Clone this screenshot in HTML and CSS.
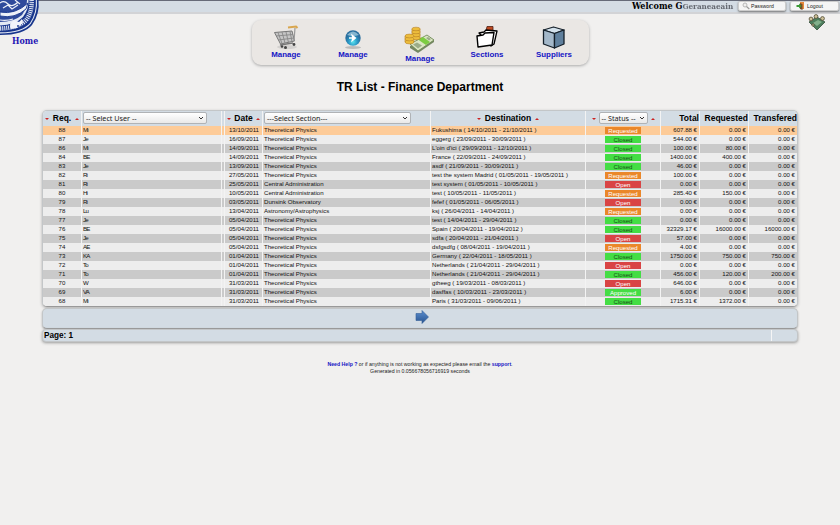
FILE: index.html
```
<!DOCTYPE html>
<html lang="en">
<head>
<meta charset="utf-8">
<title>TR List - Finance Department</title>
<link rel="stylesheet" href="styles.css">
</head>
<body>
<header class="topbar">
  <div class="welcome">Welcome G<span class="smudge">Geraneaeain</span></div>
  <a class="btn"><svg width="8" height="8" viewBox="0 0 8 8"><circle cx="3" cy="3" r="2" fill="#eee" stroke="#aaa" stroke-width=".8"/><path d="M4.500 4.500L7.300 7" stroke="#999" stroke-width="1.100"/></svg><span>Password</span></a>
  <a class="btn logout"><svg width="9" height="8" viewBox="0 0 9 8"><path d="M4 0h4v7H4z" fill="#e98a3a"/><path d="M4 1l2.500 1v6L4 7z" fill="#72512b"/><path d="M.5 3H3V1.500L5.500 4 3 6.500V5H.5z" fill="#3c9a35"/></svg><span>Logout</span></a>
</header>
<svg class="seal" width="40" height="36" viewBox="0 0 40 36">
  <path d="M38.500 0Q40 14 32 25Q24 35 0 35V0z" fill="#17358c"/>
  <path d="M36.900 0Q38 13 30.800 23.800Q23 33.400 0 33.400V0z" fill="#dfe5f2"/>
  <path d="M35.800 0Q36.800 13 30 23Q22 32.300 0 32.300V0z" fill="#17358c"/>
  <path d="M31.500 0Q32.500 11 26.500 19.500Q19 28 0 28.500" fill="none" stroke="#dfe5f2" stroke-width="4.500" stroke-dasharray="1.100 .9"/>
  <path d="M28.500 0Q29 9 23 17Q15 25 0 25.500V0z" fill="#e4eaf4"/>
  <path d="M27 0Q27 8 22 15Q14 22 0 22V0z" fill="#2f4a9b"/>
  <path d="M0 12Q15 15 28 3L26 9Q15 19 0 16z" fill="#eef1f8" stroke="#17358c" stroke-width=".9"/>
  <path d="M0 3q4-3 8 1t10-2M3 8l5-3 4 4 6-4M15 0l5 4M0 20q7 1 13-1" fill="none" stroke="#eef1f8" stroke-width="1.200"/>
  <path d="M10 24l4-4 5 2 3-3 1 4-6 5-6 1z" fill="#f3f5fa"/>
  <circle cx="18" cy="26" r=".9" fill="#17358c"/>
</svg>
<a class="home">Home</a>
<svg class="people" width="18" height="17" viewBox="0 0 18 17"><path d="M1 8l8-5 8 5-8 8z" fill="#4d7d5c" stroke="#344e3a" stroke-width=".8"/><path d="M5 9l5-3 4 2-5 4z" fill="#82b08b"/><g fill="#cfc39a" stroke="#514a34" stroke-width=".8"><circle cx="3" cy="5" r="1.900"/><circle cx="8" cy="2.500" r="1.900"/><circle cx="14.500" cy="4.500" r="1.900"/><circle cx="5" cy="11" r="1.200"/></g></svg>
<nav class="menu">
  <a><svg width="27" height="25" viewBox="0 0 27 25"><ellipse cx="14" cy="22" rx="10" ry="2" fill="#d3d1cf"/><path d="M1.500 7.500L19 6l2.500 10-14 3z" fill="#c5c5c5" stroke="#777" stroke-width="1"/><path d="M5 7.500l4 11M9 7l3 11M13 7l2.500 10.500M17 6.500l2 10M3 11l17-1.500M5 15l16-2" stroke="#888" stroke-width=".9"/><path d="M21 16L22 3" stroke="#999" stroke-width="1.200"/><path d="M15 2.500l8-1 1.500 1.500" fill="none" stroke="#d9a64e" stroke-width="2"/><path d="M7 20l13-2" stroke="#777" stroke-width="1.300"/><g fill="#444"><circle cx="9" cy="21.500" r="1.300"/><circle cx="12.500" cy="22.500" r="1.500"/><circle cx="21" cy="19.500" r="1.400"/></g></svg><b>Manage</b></a>
  <a><svg width="20" height="21" viewBox="0 0 20 21"><defs><radialGradient id="orb" cx=".5" cy=".75"><stop offset="0" stop-color="#5be4ee"/><stop offset=".55" stop-color="#2b9bc8"/><stop offset="1" stop-color="#2a6f9f"/></radialGradient></defs><ellipse cx="10" cy="18.500" rx="8" ry="1.500" fill="#bbb"/><circle cx="10" cy="9" r="7.700" fill="url(#orb)"/><path d="M4 6Q10-1 16 6Q10 8 4 6" fill="#b9dcea" opacity=".65"/><path d="M6 8.200h3L8 4.500l5.500 4.500L8 13.500l1-3.700H6z" fill="#fff"/></svg><b>Manage</b></a>
  <a class="low"><svg width="32" height="28" viewBox="0 0 32 28"><path d="M6 20l18-10 6 4v2L14 27l-8-5z" fill="#758763"/><path d="M6 18l17-9 7 5-16 11z" fill="#dbe5c4" stroke="#68844e" stroke-width=".8"/><path d="M9 18.500l4-2 5 3-4 3zM22 12l2-1 3 2-2 1.500z" fill="#9bac88"/><path d="M14 13.500l8 5.500 4-3-7-5z" fill="#7ccc42"/><g fill="#edbd3c" stroke="#b98328" stroke-width=".6"><path d="M8 3v10h8V3zM1 10v6h9v-6z"/><ellipse cx="12" cy="12" rx="4.200" ry="1.800"/><ellipse cx="12" cy="9" rx="4.200" ry="1.800"/><ellipse cx="12" cy="6" rx="4.200" ry="1.800"/><ellipse cx="12" cy="3" rx="4.200" ry="1.800"/><ellipse cx="5.500" cy="16" rx="4.500" ry="1.900"/><ellipse cx="5.500" cy="13" rx="4.500" ry="1.900"/><ellipse cx="5.500" cy="10" rx="4.500" ry="1.900"/></g></svg><b>Manage</b></a>
  <a><svg width="24" height="25" viewBox="0 0 24 25"><path d="M11 6l1-4.500h6V6z" fill="#bf4b22" stroke="#4d2115" stroke-width=".8"/><path d="M4 8l5-1 2-2 11 1-3 13-3 2z" fill="#fff" stroke="#000" stroke-width="1.300" stroke-linejoin="round"/><path d="M2 11l6-1 2-2 9-.5L17 20 3 22z" fill="#fff" stroke="#000" stroke-width="1.400" stroke-linejoin="round"/></svg><b>Sections</b></a>
  <a><svg width="24" height="24" viewBox="0 0 24 24"><g stroke="#15202a" stroke-width="1.300" stroke-linejoin="round"><path d="M1.500 4l10-3 10.500 3-9.500 3.500z" fill="#d4e2ec"/><path d="M1.500 4l11 3.500V22l-11-4z" fill="#a4b8c9"/><path d="M22 4l-9.500 3.500V22l9.500-4z" fill="#60809d"/></g></svg><b>Suppliers</b></a>
</nav>
<h1>TR List - Finance Department</h1>
<main>
  <section class="list">
    <div class="row head">
      <div class="mid"><i class="down"></i><b>Req.</b><i class="up"></i></div>
      <div><span class="select user">-- Select User --<svg viewBox="0 0 6 4"><path d="M1 1l2 2 2-2"/></svg></span></div>
      <div class="sliver"></div>
      <div class="mid date"><i class="down"></i><b>Date</b><i class="up"></i></div>
      <div><span class="select section">---Select Section---<svg viewBox="0 0 6 4"><path d="M1 1l2 2 2-2"/></svg></span></div>
      <div class="mid"><i class="down"></i><b>Destination</b><i class="up"></i></div>
      <div class="mid stat"><i class="down"></i><span class="select status">-- Status --<svg viewBox="0 0 6 4"><path d="M1 1l2 2 2-2"/></svg></span><i class="up"></i></div>
      <div class="end"><b>Total</b></div><div class="end"><b>Requested</b></div><div class="end"><b>Transfered</b></div>
    </div>
    <div id="rows"></div>
  </section>
  <section class="pager"><svg width="14" height="14" viewBox="0 0 14 14"><defs><linearGradient id="ar" x2="0" y2="1"><stop stop-color="#5b8fd0"/><stop offset="1" stop-color="#28538f"/></linearGradient></defs><path d="M1 3.500h6V.5L13.500 7 7 13.500v-3H1z" fill="url(#ar)" stroke="#345f98" stroke-width=".6"/></svg></section>
  <section class="page"><b>Page: 1</b><span></span></section>
</main>
<footer><p><b>Need Help ?</b> or if anything is not working as expected please email the <b>support</b>.</p><p>Generated in 0.056678056716919 seconds</p></footer>
<script src="rows.js"></script>
</body>
</html>
```
FILE: styles.css
```
* { box-sizing: border-box; }
body { margin: 0; width: 840px; height: 525px; overflow: hidden; position: relative; background: #f1f0ef; font-family: "Liberation Sans", Arial, sans-serif; color: #000; }
.topbar { height: 14px; border-top: 1px solid #666a78; border-bottom: 2px solid #d2d3d6; background: #d4dce4; display: flex; align-items: flex-start; justify-content: flex-end; gap: 4px; padding-right: 1px; }
.welcome { width: 102px; font: bold 9px/10px "DejaVu Serif Condensed", "DejaVu Serif", serif; white-space: nowrap; }
.smudge { color: #666a72; filter: blur(.7px); font-size: 8px; }
.btn { width: 48px; height: 10px; border: 1px solid #ccc; border-radius: 2px; background: #f5f5f5; box-shadow: 0 1px 2px #777; display: flex; align-items: center; padding-left: 3px; gap: 1px; font-size: 5.2px; color: #222; }
.logout { width: 49px; padding-left: 5px; gap: 2px; }
.seal { position: absolute; left: 0; top: 0; }
.home { position: absolute; left: 12px; top: 36px; font: bold 8.8px/10px "DejaVu Serif Condensed", "DejaVu Serif", serif; color: #1e14b4; }
.people { position: absolute; left: 808px; top: 14px; }
.menu { width: 337px; height: 45px; margin: 6px 0 0 251.500px; border-radius: 9px; background: #eae7e4; box-shadow: 0 1px 3px #aaa; display: flex; padding: 0 1px; }
.menu a { width: 67px; height: 39px; display: flex; flex-direction: column; align-items: center; justify-content: flex-end; }
.menu a.low { height: 43px; }
.menu b { font-size: 7.9px; line-height: 9px; color: #1414c4; }
h1 { margin: 15px 0 0; font-size: 12px; line-height: 14px; text-align: center; }
main { width: 756px; margin: 16px 0 0 42px; }
.list { height: 197px; border: 1px solid #c3c6c8; border-bottom-color: #999; border-radius: 5px; overflow: hidden; background: #f3f3f3; box-shadow: 0 1px 3px #aaa; }
.row { display: grid; grid-template-columns: 38px 139px 2px 37px 167px 154px 74px 38px 48px 48px; column-gap: 1px; height: 9px; font-size: 6.1px; line-height: 8px; color: #111; white-space: nowrap; }
.row > div { background: #ededed; padding: 0 1px; overflow: hidden; }
.row.alt > div { background: #cacaca; }
.row.hot > div { background: #fdcb98; }
.row.head { height: 15px; line-height: 15px; color: #000; font-size: 8.5px; }
.row.head > div { background: #d3dce4; display: flex; align-items: center; padding: 0 1px; }
.row.head > .mid { justify-content: center; gap: 4px; }
.row.head > .end { justify-content: flex-end; padding: 0; }
.row.head > .date { gap: 3px; }
.row.head > .stat { gap: 3px; }
.row .sliver { padding: 0; }
.down, .up { border: 2px solid transparent; width: 0; height: 0; }
.down { border-top-color: #c22; border-bottom: 0; }
.up { border-bottom-color: #c22; border-top: 0; }
.select { display: flex; align-items: center; justify-content: space-between; height: 12px; margin-bottom: 1px; border: 1px solid #b0b3b6; border-radius: 2px; background: linear-gradient(#fff, #e9e9e9); font: 7.2px/10px "Noto Sans", sans-serif; color: #222; padding: 0 2px; }
.select svg { width: 6px; height: 4px; fill: none; stroke: #333; stroke-width: 1; }
.user { width: 124px; }
.section { width: 147px; }
.status { width: 49px; }
.num, .tag { text-align: center; }
.name { letter-spacing: -.8px; }
.row > .money { text-align: right; padding-right: 2px; }
.row > .day { text-align: right; padding: 0 3px 0 0; }
.row > .tag { padding: 1px 19px; }
.tag span { display: block; height: 7px; line-height: 7px; background: #4d4; color: #174d17; }
.tag .Open { background: #d94444; color: #fff; }
.tag .Requested { background: #ea872a; color: #fff; }
.tag .Approved { color: #fff; }
.pager { height: 21px; margin-top: 1px; border: 1px solid #c3c6c8; border-bottom-color: #999; border-radius: 5px; background: #d3dce4; box-shadow: 0 1px 2px #aaa; display: flex; align-items: center; justify-content: center; padding: 0 0 4px 3px; }
.page { height: 13px; border: 1px solid #c3c6c8; border-radius: 4px; background: #d3dce4; box-shadow: 0 1px 3px #999; display: flex; justify-content: space-between; padding: 0 25px 0 1px; font-size: 8.2px; line-height: 11px; }
.page span { width: 1px; background: #f5f5f5; }
footer { margin-top: 19px; text-align: center; font-size: 5.2px; line-height: 6.500px; color: #222; }
footer p { margin: 0; }
footer b { color: #1414c4; }
```
FILE: rows.js
```
const T = "Theoretical Physics", C = "Central Administration";
const data = [
  [88, "Mi", "13/10/2011", T, "Fukushima ( 14/10/2011 - 21/10/2011 )", "Requested", "607.88", "0.00", "0.00"],
  [87, "Je", "16/09/2011", T, "eggerg ( 23/09/2011 - 30/09/2011 )", "Closed", "544.00", "0.00", "0.00"],
  [86, "Mi", "14/09/2011", T, "L'oin d'ici ( 29/09/2011 - 12/10/2011 )", "Closed", "100.00", "80.00", "0.00"],
  [84, "BE", "14/09/2011", T, "France ( 22/09/2011 - 24/09/2011 )", "Closed", "1400.00", "400.00", "0.00"],
  [83, "Je", "13/09/2011", T, "asdf ( 21/09/2011 - 30/09/2011 )", "Closed", "46.00", "0.00", "0.00"],
  [82, "Ri", "27/05/2011", T, "test the system Madrid ( 01/05/2011 - 19/05/2011 )", "Requested", "100.00", "0.00", "0.00"],
  [81, "Ri", "25/05/2011", C, "test system ( 01/05/2011 - 10/05/2011 )", "Open", "0.00", "0.00", "0.00"],
  [80, "Hi", "10/05/2011", C, "test ( 10/05/2011 - 11/05/2011 )", "Requested", "285.40", "150.00", "0.00"],
  [79, "Ri", "03/05/2011", "Dunsink Observatory", "fefef ( 01/05/2011 - 06/05/2011 )", "Open", "0.00", "0.00", "0.00"],
  [78, "Lu", "13/04/2011", "Astronomy/Astrophysics", "ksj ( 26/04/2011 - 14/04/2011 )", "Requested", "0.00", "0.00", "0.00"],
  [77, "Je", "05/04/2011", T, "test ( 14/04/2011 - 29/04/2011 )", "Closed", "0.00", "0.00", "0.00"],
  [76, "BE", "05/04/2011", T, "Spain ( 20/04/2011 - 19/04/2012 )", "Closed", "32329.17", "16000.00", "16000.00"],
  [75, "Je", "05/04/2011", T, "sdfa ( 20/04/2011 - 21/04/2011 )", "Open", "57.00", "0.00", "0.00"],
  [74, "AE", "05/04/2011", T, "dsfgsdfg ( 08/04/2011 - 19/04/2011 )", "Requested", "4.00", "0.00", "0.00"],
  [73, "KA", "01/04/2011", T, "Germany ( 22/04/2011 - 18/05/2011 )", "Closed", "1750.00", "750.00", "750.00"],
  [72, "To", "01/04/2011", T, "Netherlands ( 21/04/2011 - 29/04/2011 )", "Open", "0.00", "0.00", "0.00"],
  [71, "To", "01/04/2011", T, "Netherlands ( 21/04/2011 - 29/04/2011 )", "Closed", "456.00", "120.00", "200.00"],
  [70, "W", "31/03/2011", T, "gtheeg ( 19/03/2011 - 08/03/2011 )", "Open", "646.00", "0.00", "0.00"],
  [69, "VA", "31/03/2011", T, "dasffas ( 10/03/2011 - 23/03/2011 )", "Approved", "6.00", "0.00", "0.00"],
  [68, "Mi", "31/03/2011", T, "Paris ( 31/03/2011 - 09/06/2011 )", "Closed", "1715.31", "1372.00", "0.00"]
];
document.getElementById("rows").innerHTML = data.map((r, i) =>
  `<div class="row ${i === 0 ? "hot" : i % 2 ? "" : "alt"}"><div class="num">${r[0]}</div><div class="name">${r[1]}</div><div class="sliver"></div><div class="day">${r[2]}</div><div>${r[3]}</div><div>${r[4]}</div><div class="tag"><span class="${r[5]}">${r[5]}</span></div>${r.slice(6).map(m => `<div class="money">${m} €</div>`).join("")}</div>`).join("");
```
